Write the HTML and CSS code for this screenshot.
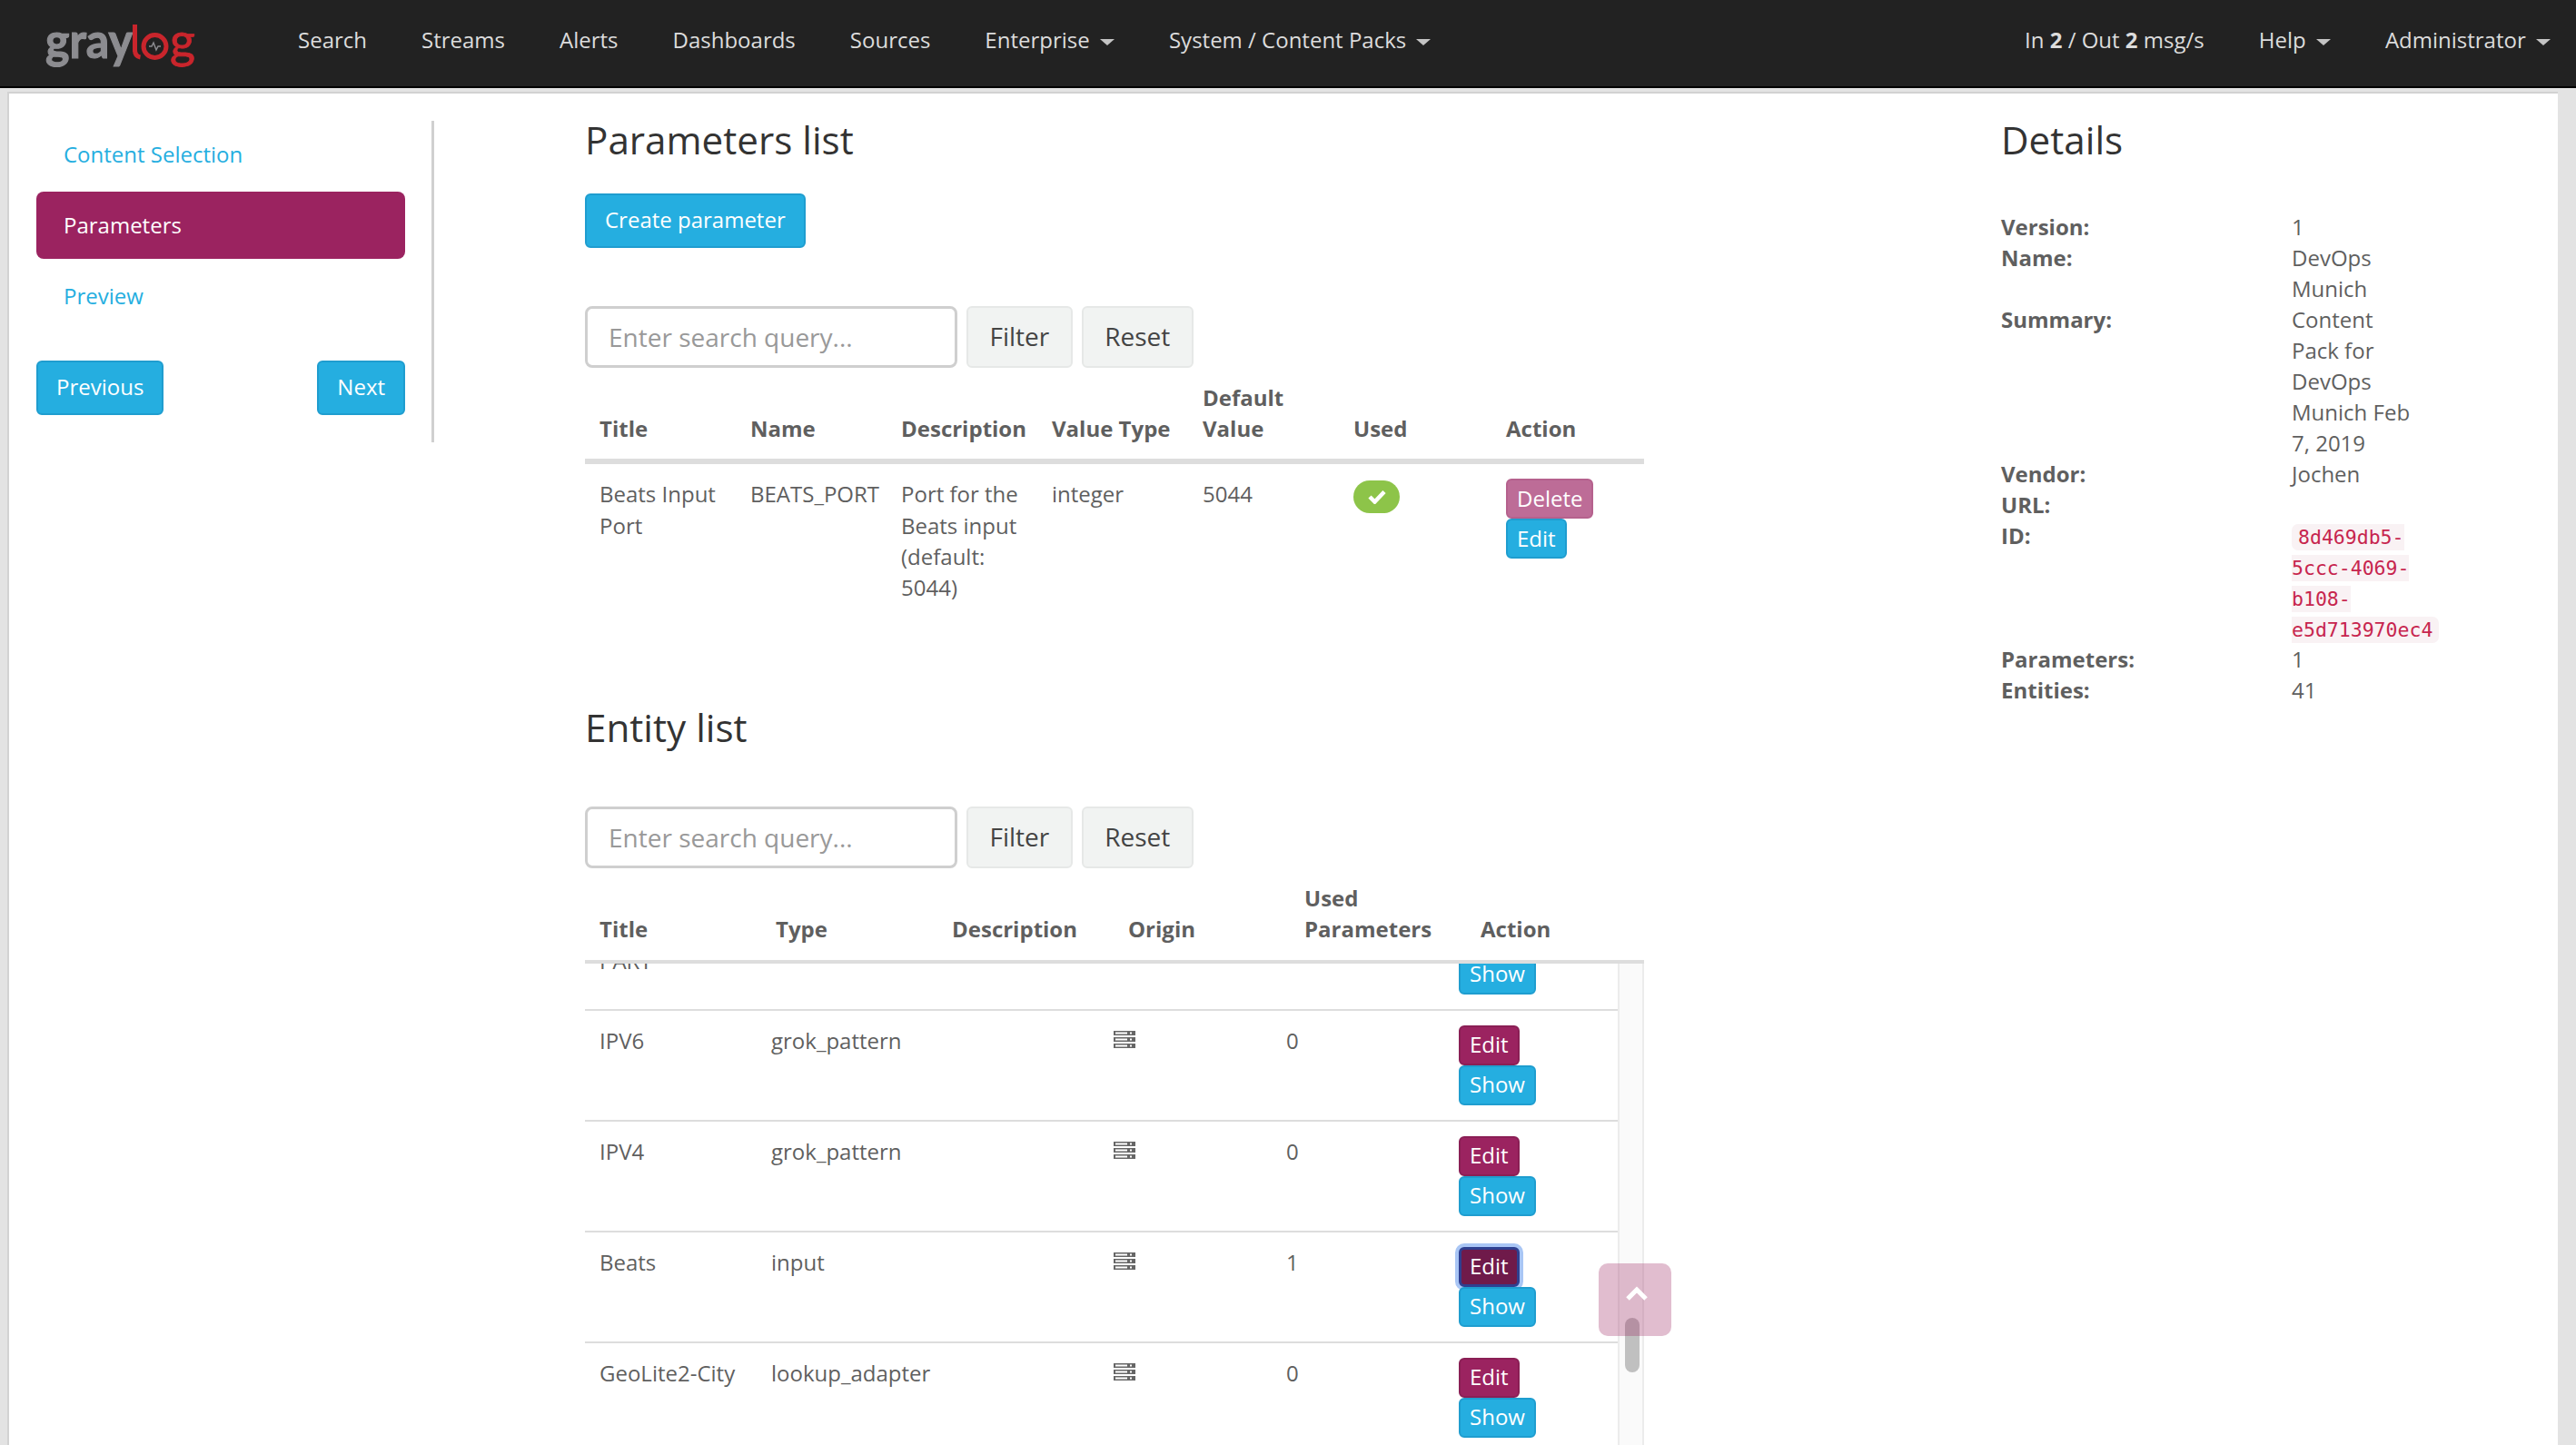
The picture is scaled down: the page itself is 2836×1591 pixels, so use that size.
FILE: index.html
```html
<!DOCTYPE html>
<html>
<head>
  <meta name="viewport" content="width=device-width, initial-scale=1.0">
  <link rel="stylesheet" href="styles.css">
</head>
<body>
  <nav class="topbar">
    <svg class="logo" width="170" height="60" viewBox="0 0 170 60">
      <text class="logo_gray" x="0" y="46" textLength="96" lengthAdjust="spacingAndGlyphs">gray</text>
      <rect class="logo_red_fill" x="96" y="9" width="5" height="30"></rect>
      <path class="logo_red_line" d="M98.500 37 q0 7 6 8"></path>
      <circle class="logo_red_line" cx="120.500" cy="33" r="12.500"></circle>
      <path class="logo_pulse" d="M114 33h3l2-4 3 8 2-4h3"></path>
      <text class="logo_red" x="137" y="46" textLength="28" lengthAdjust="spacingAndGlyphs">g</text>
    </svg>
    <ul class="nav_items">
      <li>Search</li>
      <li>Streams</li>
      <li>Alerts</li>
      <li>Dashboards</li>
      <li>Sources</li>
      <li>Enterprise <span class="caret"></span></li>
      <li>System / Content Packs <span class="caret"></span></li>
    </ul>
    <ul class="nav_items nav_right">
      <li>In <b>2</b> / Out <b>2</b> msg/s</li>
      <li>Help <span class="caret"></span></li>
      <li>Administrator <span class="caret"></span></li>
    </ul>
  </nav>

  <div class="panel">
    <div class="sidebar">
      <a class="side_link">Content Selection</a>
      <a class="side_link side_active">Parameters</a>
      <a class="side_link">Preview</a>
      <div class="side_buttons">
        <button class="btn btn_info">Previous</button>
        <button class="btn btn_info">Next</button>
      </div>
    </div>

    <div class="main_col">
      <h2>Parameters list</h2>
      <button class="btn btn_info create_btn">Create parameter</button>
      <div class="search_form">
        <input class="search_input" placeholder="Enter search query...">
        <button class="btn btn_default">Filter</button>
        <button class="btn btn_default">Reset</button>
      </div>
      <table class="data_table param_table">
        <thead>
          <tr>
            <th>Title</th>
            <th>Name</th>
            <th>Description</th>
            <th>Value Type</th>
            <th>Default Value</th>
            <th>Used</th>
            <th>Action</th>
          </tr>
        </thead>
        <tbody>
          <tr>
            <td>Beats Input Port</td>
            <td class="no_pad_right">BEATS_PORT</td>
            <td>Port for the Beats input (default: 5044)</td>
            <td>integer</td>
            <td>5044</td>
            <td>
              <span class="used_badge">
                <svg width="20" height="16" viewBox="0 0 20 16"><path d="M2 8l5.500 5.500L18 2.500" fill="none" stroke="#fff" stroke-width="4.500"></path></svg>
              </span>
            </td>
            <td>
              <div class="action_stack">
                <button class="btn btn_xs btn_delete">Delete</button>
                <button class="btn btn_xs btn_info">Edit</button>
              </div>
            </td>
          </tr>
        </tbody>
      </table>

      <h2 class="entity_title">Entity list</h2>
      <div class="search_form">
        <input class="search_input" placeholder="Enter search query...">
        <button class="btn btn_default">Filter</button>
        <button class="btn btn_default">Reset</button>
      </div>
      <table class="data_table entity_head">
        <thead>
          <tr>
            <th>Title</th>
            <th>Type</th>
            <th>Description</th>
            <th>Origin</th>
            <th>Used Parameters</th>
            <th>Action</th>
          </tr>
        </thead>
      </table>
      <div class="entity_scroll">
        <div class="entity_rows">
          <table class="data_table entity_body">
            <tbody>
              <tr>
                <td>HOSTNAME PART</td>
                <td>grok_pattern</td>
                <td></td>
                <td><svg class="server_icon"><use href="#server"></use></svg></td>
                <td>0</td>
                <td>
                  <div class="action_stack">
                    <button class="btn btn_xs btn_primary">Edit</button>
                    <button class="btn btn_xs btn_info">Show</button>
                  </div>
                </td>
              </tr>
              <tr>
                <td>IPV6</td>
                <td>grok_pattern</td>
                <td></td>
                <td><svg class="server_icon"><use href="#server"></use></svg></td>
                <td>0</td>
                <td>
                  <div class="action_stack">
                    <button class="btn btn_xs btn_primary">Edit</button>
                    <button class="btn btn_xs btn_info">Show</button>
                  </div>
                </td>
              </tr>
              <tr>
                <td>IPV4</td>
                <td>grok_pattern</td>
                <td></td>
                <td><svg class="server_icon"><use href="#server"></use></svg></td>
                <td>0</td>
                <td>
                  <div class="action_stack">
                    <button class="btn btn_xs btn_primary">Edit</button>
                    <button class="btn btn_xs btn_info">Show</button>
                  </div>
                </td>
              </tr>
              <tr>
                <td>Beats</td>
                <td>input</td>
                <td></td>
                <td><svg class="server_icon"><use href="#server"></use></svg></td>
                <td>1</td>
                <td>
                  <div class="action_stack">
                    <button class="btn btn_xs btn_primary btn_focus">Edit</button>
                    <button class="btn btn_xs btn_info">Show</button>
                  </div>
                </td>
              </tr>
              <tr>
                <td>GeoLite2-City</td>
                <td>lookup_adapter</td>
                <td></td>
                <td><svg class="server_icon"><use href="#server"></use></svg></td>
                <td>0</td>
                <td>
                  <div class="action_stack">
                    <button class="btn btn_xs btn_primary">Edit</button>
                    <button class="btn btn_xs btn_info">Show</button>
                  </div>
                </td>
              </tr>
            </tbody>
          </table>
        </div>
        <div class="scroll_track">
          <div class="scroll_thumb"></div>
        </div>
      </div>
    </div>

    <div class="details_col">
      <h2>Details</h2>
      <dl class="details_list">
        <dt>Version:</dt><dd>1</dd>
        <dt>Name:</dt><dd>DevOps Munich</dd>
        <dt>Summary:</dt><dd>Content Pack for DevOps Munich Feb 7, 2019</dd>
        <dt>Vendor:</dt><dd>Jochen</dd>
        <dt>URL:</dt><dd></dd>
        <dt>ID:</dt><dd><code>8d469db5-5ccc-4069-b108-e5d713970ec4</code></dd>
        <dt>Parameters:</dt><dd>1</dd>
        <dt>Entities:</dt><dd>41</dd>
      </dl>
    </div>
  </div>

  <button class="to_top">
    <svg width="24" height="16" viewBox="0 0 24 16"><path d="M2 14L12 4l10 10" fill="none" stroke="#fff" stroke-width="5"></path></svg>
  </button>

  <svg width="0" height="0" class="defs_only">
    <symbol id="server" viewBox="0 0 24 19">
      <path fill-rule="evenodd" d="M0 0h24v5H0zM2 1.500v2h13v-2zM18 1.500v2h2v-2zM0 7h24v5H0zM2 8.500v2h13v-2zM18 8.500v2h2v-2zM0 14h24v5H0zM2 15.500v2h13v-2zM18 15.500v2h2v-2z"></path>
    </symbol>
  </svg>
</body>
</html>
```

FILE: styles.css
```css
* {
  box-sizing: border-box;
}
html, body {
  height: 100%;
  margin: 0;
  overflow: hidden;
}
body {
  display: flex;
  flex-direction: column;
  background-color: #e3e3e3;
  color: #5f5f5f;
  font-family: "Open Sans", sans-serif;
  font-size: 24px;
  line-height: 34.2px;
}
.defs_only {
  display: none;
}

/* top navigation */
.topbar {
  display: flex;
  align-items: center;
  flex: none;
  height: 97px;
  padding: 0 28px 6px 50px;
  background-color: #222;
  border-bottom: 2px solid #000;
  color: #dcdcdc;
}
.logo {
  flex: none;
  margin: 6px 108px 0 0;
  overflow: visible;
}
.logo_gray {
  fill: #8c8c90;
  stroke: #8c8c90;
  stroke-width: 1.200;
  font-family: "Lato", sans-serif;
  font-size: 54px;
  font-weight: 700;
}
.logo_red {
  fill: #c9252c;
  stroke: #c9252c;
  stroke-width: 0.800;
  font-family: "Lato", sans-serif;
  font-size: 54px;
}
.logo_red_fill {
  fill: #c9252c;
}
.logo_red_line {
  fill: none;
  stroke: #c9252c;
  stroke-width: 5;
}
.logo_pulse {
  fill: none;
  stroke: #8c8c90;
  stroke-width: 1.500;
}
.nav_items {
  display: flex;
  gap: 60px;
  margin: 0;
  padding: 0;
  list-style: none;
}
.nav_right {
  margin-left: auto;
}
.caret {
  display: inline-block;
  margin-left: 5px;
  vertical-align: middle;
  border-top: 7px solid #c4c4c4;
  border-left: 8px solid transparent;
  border-right: 8px solid transparent;
}

/* content panel */
.panel {
  display: flex;
  flex: 1;
  align-items: flex-start;
  min-height: 0;
  margin: 4px 20px 0 8px;
  padding: 30px 0 0 30px;
  background-color: #fff;
  border-top: 2px solid #d2d2d2;
  border-left: 2px solid #d2d2d2;
  overflow: hidden;
}
.sidebar {
  flex: none;
  width: 438px;
  height: 354px;
  padding-right: 29px;
  border-right: 3px solid #d0d0d0;
}
.side_link {
  display: block;
  height: 74px;
  margin-bottom: 4px;
  padding: 20px 30px;
  border-radius: 8px;
  color: #25aee0;
}
.side_active {
  background-color: #9b2360;
  color: #fff;
}
.side_buttons {
  display: flex;
  justify-content: space-between;
  margin-top: 34px;
}
.main_col {
  display: flex;
  flex-direction: column;
  flex: none;
  align-self: stretch;
  width: 1166px;
  margin-left: 166px;
}
.details_col {
  flex: none;
  width: 500px;
  margin-left: 393px;
}
h2 {
  flex: none;
  margin: -2px 0 2px;
  color: #333;
  font-size: 42.200px;
  font-weight: 400;
  line-height: 45px;
}

/* buttons */
.btn {
  flex: none;
  height: 60px;
  padding: 0 20px 3px;
  border: 2px solid transparent;
  border-radius: 6px;
  font-family: "Open Sans", sans-serif;
  font-size: 24px;
}
.btn_info {
  background-color: #25aee0;
  border-color: #1f9dcf;
  color: #fff;
}
.btn_default {
  height: 68px;
  padding: 0 23.500px 2px;
  background-color: #f1f3f2;
  border-color: #e6e8e7;
  color: #444;
  font-size: 28px;
}
.btn_primary {
  background-color: #9b2360;
  border-color: #8a1f55;
  color: #fff;
}
.btn_delete {
  background-color: #bd6c97;
  border-color: #b5618d;
  color: #fff;
}
.btn_xs {
  height: 44px;
  padding: 0 10px 2px;
  font-size: 24px;
}
.btn_focus {
  background-color: #6f1a4a;
  border: 3px solid #2f3f90;
  padding: 0 9px 2px;
  box-shadow: 0 0 0 4px #a9c6f5;
}
.create_btn {
  align-self: flex-start;
  margin-top: 35px;
}
.action_stack {
  display: flex;
  flex-direction: column;
  align-items: flex-start;
}

/* search */
.search_form {
  display: flex;
  flex: none;
  gap: 10px;
  margin-top: 64px;
}
.search_input {
  width: 410px;
  height: 68px;
  padding: 0 23px 0;
  border: 3px solid #cfcfcf;
  border-radius: 8px;
  font-family: "Open Sans", sans-serif;
  font-size: 28px;
}
.search_input::placeholder {
  color: #999;
}

/* tables */
.data_table {
  flex: none;
  width: 100%;
  border-collapse: separate;
  border-spacing: 0;
  table-layout: fixed;
}
.data_table th {
  padding: 16px;
  border-bottom: 6px solid #ddd;
  font-weight: 700;
  text-align: left;
  vertical-align: bottom;
}
.data_table td {
  padding: 16px;
  vertical-align: top;
}
.param_table th:not(:last-child) {
  width: 166px;
}
.param_table th:nth-child(6) {
  width: 168px;
}
.entity_head th:not(:last-child) {
  width: 194px;
}
.entity_body td:not(:last-child) {
  width: 189px;
}
.entity_body td:last-child {
  padding-left: 17px;
}
.no_pad_right {
  padding-right: 0 !important;
}
.used_badge {
  display: inline-flex;
  align-items: center;
  justify-content: center;
  width: 51px;
  height: 36px;
  margin-top: 2px;
  border-radius: 18px;
  background-color: #8dc449;
}
.entity_title {
  margin-top: 98px;
  margin-bottom: 1px;
}
.entity_head th {
  border-bottom-width: 4px;
}
.entity_scroll {
  display: flex;
  flex: 1;
  min-height: 0;
  overflow: hidden;
}
.entity_rows {
  flex: 1;
  min-width: 0;
}
.entity_body {
  margin-top: -72px;
}
.entity_body td {
  border-top: 2px solid #ddd;
}
.server_icon {
  display: block;
  width: 24px;
  height: 19px;
  margin: 6px 0 0 -1px;
  fill: #666;
}
.scroll_track {
  flex: none;
  width: 29px;
  padding: 390px 6px 0;
  background-color: #fafafa;
  border-left: 2px solid #ececec;
  border-right: 2px solid #ececec;
}
.scroll_thumb {
  width: 16px;
  height: 60px;
  border-radius: 8px;
  background-color: #c0c0c0;
}

/* details */
.details_list {
  display: grid;
  grid-template-columns: 320px 146px;
  margin: 57px 0 0;
  line-height: 34px;
}
.details_list dt {
  font-weight: 700;
}
.details_list dd {
  margin: 0;
}
code {
  padding: 2px 7px;
  border-radius: 7px;
  background-color: #f9f2f4;
  color: #c7254e;
  font-family: "DejaVu Sans Mono", monospace;
  font-size: 21.500px;
  line-height: 1;
}

/* scroll to top */
.to_top {
  position: fixed;
  right: 996px;
  bottom: 120px;
  width: 80px;
  height: 80px;
  padding: 0 0 12px 4px;
  border: 0;
  border-radius: 10px;
  background-color: rgba(155, 35, 96, 0.3);
}
```
